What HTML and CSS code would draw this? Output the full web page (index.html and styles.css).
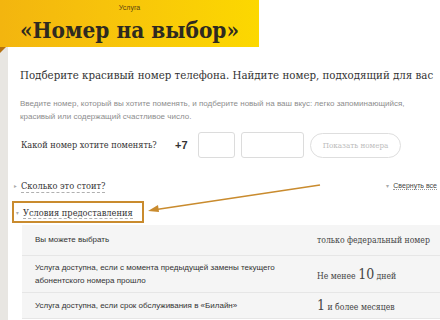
FILE: index.html
```html
<!DOCTYPE html>
<html lang="ru">
<head>
    <meta charset="UTF-8">
    <title>Номер на выбор</title>
    <link rel="stylesheet" href="styles.css">
</head>
<body>
<header class="banner">
    <div class="banner-kicker">Услуга</div>
    <h1 class="banner-title">«Номер на выбор»</h1>
</header>
<div class="page">
    <div class="rail"><span class="fold"></span></div>
    <main class="content">
        <h2 class="lead">Подберите красивый номер телефона. Найдите номер, подходящий для вас</h2>
        <p class="hint">Введите номер, который вы хотите поменять, и подберите новый на ваш вкус: легко запоминающийся,<br>красивый или содержащий счастливое число.</p>

        <form class="pick">
            <label class="pick-label" for="code">Какой номер хотите поменять?</label>
            <span class="pick-prefix">+7</span>
            <input class="pick-code" type="text" id="code">
            <input class="pick-num" type="text" id="num">
            <button class="pick-btn" type="button">Показать номера</button>
        </form>

        <div class="toggles">
            <div class="toggle-row">
                <span class="toggle closed">Сколько это стоит?</span>
                <span class="collapse-all">Свернуть все</span>
            </div>
            <div class="toggle-row">
                <span class="marked"><span class="toggle open">Условия предоставления</span></span>
            </div>
        </div>

        <table class="terms">
            <tr class="terms-head">
                <td class="terms-key">Вы можете выбрать</td>
                <td class="terms-val">только федеральный номер</td>
            </tr>
            <tr>
                <td class="terms-key">Услуга доступна, если с момента предыдущей замены текущего<br>абонентского номера прошло</td>
                <td class="terms-val">Не менее <b>10</b> дней</td>
            </tr>
            <tr class="terms-last">
                <td class="terms-key">Услуга доступна, если срок обслуживания в «Билайн»</td>
                <td class="terms-val"><b>1</b> и более месяцев</td>
            </tr>
        </table>
    </main>
</div>

<svg class="pointer" width="440" height="320" viewBox="0 0 440 320">
    <line x1="320" y1="185" x2="153" y2="210" stroke="#c98b2e" stroke-width="1.6"/>
    <polygon points="148,211 158,205 159,212" fill="#c98b2e"/>
</svg>
</body>
</html>
```

FILE: styles.css
```css
* {
    box-sizing: border-box;
}
body {
    margin: 0;
    width: 440px;
    height: 320px;
    overflow: hidden;
    background: #fff;
    font-family: "Liberation Sans", Arial, sans-serif;
    position: relative;
}

.banner-title,
.lead,
.pick-label,
.pick-btn,
.toggle,
.terms-val {
    font-family: "DejaVu Serif Condensed", "DejaVu Serif", serif;
    font-stretch: condensed;
}

.banner {
    width: 259px;
    height: 47px;
    background: linear-gradient(90deg, #f3b50f 0%, #f8c60a 50%, #fcd800 100%);
    text-align: center;
    padding-top: 4px;
}
.banner-kicker {
    font-size: 7px;
    color: #5a4410;
    line-height: 8px;
}
.banner-title {
    margin: 3px 0 0 0;
    font-weight: bold;
    font-size: 22.4px;
    line-height: 30px;
    color: #2e2a20;
    white-space: nowrap;
}

.page {
    display: flex;
}
.rail {
    flex-shrink: 0;
    width: 8px;
    height: 280px;
    background: #e8e6e2;
    position: relative;
}
.fold {
    position: absolute;
    left: 0;
    top: 0;
    border-top: 6px solid #b5720f;
    border-right: 6px solid transparent;
}

.content {
    flex: 1;
    min-width: 0;
    padding-left: 12px;
}

.lead {
    margin: 21px 0 0 0;
    font-weight: normal;
    font-size: 11.4px;
    line-height: 14px;
    color: #333;
    white-space: nowrap;
}
.hint {
    margin: 15px 0 0 0;
    font-size: 8px;
    line-height: 13px;
    color: #8d8d8d;
    white-space: nowrap;
}

.pick {
    display: flex;
    align-items: center;
    margin-top: 9px;
    height: 26px;
}
.pick-label {
    font-size: 9.1px;
    color: #333;
    width: 155px;
    padding-left: 1px;
    white-space: nowrap;
}
.pick-prefix {
    font-size: 11px;
    font-weight: bold;
    color: #333;
    width: 23px;
}
.pick-code,
.pick-num {
    height: 26px;
    border: 1px solid #dcdcdc;
    border-radius: 3px;
    background: #fff;
    margin-right: 6px;
}
.pick-code {
    width: 37px;
}
.pick-num {
    width: 63px;
}
.pick-btn {
    height: 25px;
    width: 91px;
    border: 1px solid #dedede;
    border-radius: 13px;
    background: #fff;
    font-size: 8px;
    color: #bdbdbd;
    padding: 0;
}

.toggles {
    margin-top: 15px;
}
.toggle-row {
    display: flex;
    justify-content: space-between;
    align-items: center;
    height: 26px;
}
.toggle {
    font-size: 9.2px;
    color: #333;
    border-bottom: 1px dashed #b0b0b0;
    line-height: 12px;
    position: relative;
    margin-left: 1px;
}
.toggle::before {
    position: absolute;
    left: -7px;
    top: 0;
    font-size: 6px;
    line-height: 12px;
    color: #aaa;
}
.toggle.closed::before {
    content: "\25B8";
}
.toggle.open::before {
    content: "\25BE";
}
.marked {
    margin-left: -8px;
    padding: 2px 9px 2px 8px;
    border: 2px solid #c98b2e;
    line-height: 12px;
}
.collapse-all {
    font-size: 7px;
    color: #444;
    border-bottom: 1px dotted #999;
    position: relative;
    margin-right: 3px;
}
.collapse-all::before {
    content: "\25BE";
    position: absolute;
    left: -7px;
    top: 0;
    font-size: 6px;
    color: #aaa;
}

.terms {
    margin: 0 0 0 2px;
    width: 418px;
    border-collapse: collapse;
    background: #f5f5f5;
}
.terms td {
    border-bottom: 1px solid #e6e6e6;
    vertical-align: middle;
}
.terms-key {
    font-size: 8px;
    line-height: 13px;
    color: #333;
    padding: 0 0 0 13px;
    width: 294px;
    height: 37px;
}
.terms-head .terms-key {
    height: 30px;
}
.terms-last .terms-key {
    height: 26px;
}
.terms-val {
    font-size: 8.6px;
    color: #444;
}
.terms-val b {
    font-weight: normal;
    font-size: 14px;
}

.pointer {
    position: absolute;
    left: 0;
    top: 0;
    pointer-events: none;
}
```
